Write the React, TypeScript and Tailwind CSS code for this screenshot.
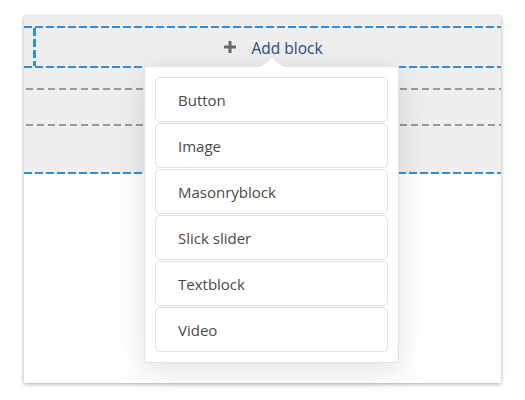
const blocks = ['Button', 'Image', 'Masonryblock', 'Slick slider', 'Textblock', 'Video']

function BlueLine() {
  return <div className="h-[2px] bg-[repeating-linear-gradient(90deg,#2f8fdd_0_8px,transparent_8px_11px)]" />
}

function GrayLine() {
  return <div className="h-[2px] bg-[repeating-linear-gradient(90deg,transparent_0_2px,#9a9a9a_2px_9px,transparent_9px_11px)]" />
}

export default function App() {
  return (
    <div className="min-h-screen bg-white pt-[16px] pl-[24px] font-['Open_Sans',sans-serif]">
      <div className="relative w-[477px] h-[367px] bg-white shadow-[0_1px_4px_rgba(0,0,0,0.35)]">
        {/* editor rows */}
        <div className="bg-[#eeeeee] pt-[10px]">
          <BlueLine />
          <div className="flex h-[38px]">
            <div className="ml-[9px] w-[3px] bg-[repeating-linear-gradient(180deg,#2f8fdd_0_8px,transparent_8px_11px)]" />
            <div className="flex flex-1 items-center justify-center gap-[15px] pl-[10px] pt-[4px]">
              <svg width="12" height="12" viewBox="0 0 12 12" className="shrink-0 -mt-[4px]">
                <path d="M6 0v12M0 6h12" stroke="#6b6b6b" strokeWidth="3" />
              </svg>
              <span className="text-[15.5px] text-[#2c4c7c]">Add block</span>
            </div>
          </div>
          <BlueLine />
          <div className="h-[20px]" />
          <GrayLine />
          <div className="h-[34px]" />
          <GrayLine />
          <div className="h-[46px]" />
          <BlueLine />
        </div>

        {/* block picker popover */}
        <div className="absolute left-[120px] top-[50px] w-[255px] border border-[#e2e2e2] bg-white p-[10px] shadow-[0_8px_30px_rgba(0,0,0,0.12)]">
          <div className="absolute -top-[9px] left-1/2 -translate-x-1/2 w-0 h-0 border-l-[11px] border-r-[11px] border-b-[9px] border-l-transparent border-r-transparent border-b-white" />
          <div className="flex flex-col gap-[1px]">
            {blocks.map((b) => (
              <div
                key={b}
                className="flex h-[45px] items-center rounded-[5px] border border-[#dfdfe4] pl-[22px] pt-[2px] text-[15px] text-[#4a4a4a]"
              >
                {b}
              </div>
            ))}
          </div>
        </div>
      </div>
    </div>
  )
}
